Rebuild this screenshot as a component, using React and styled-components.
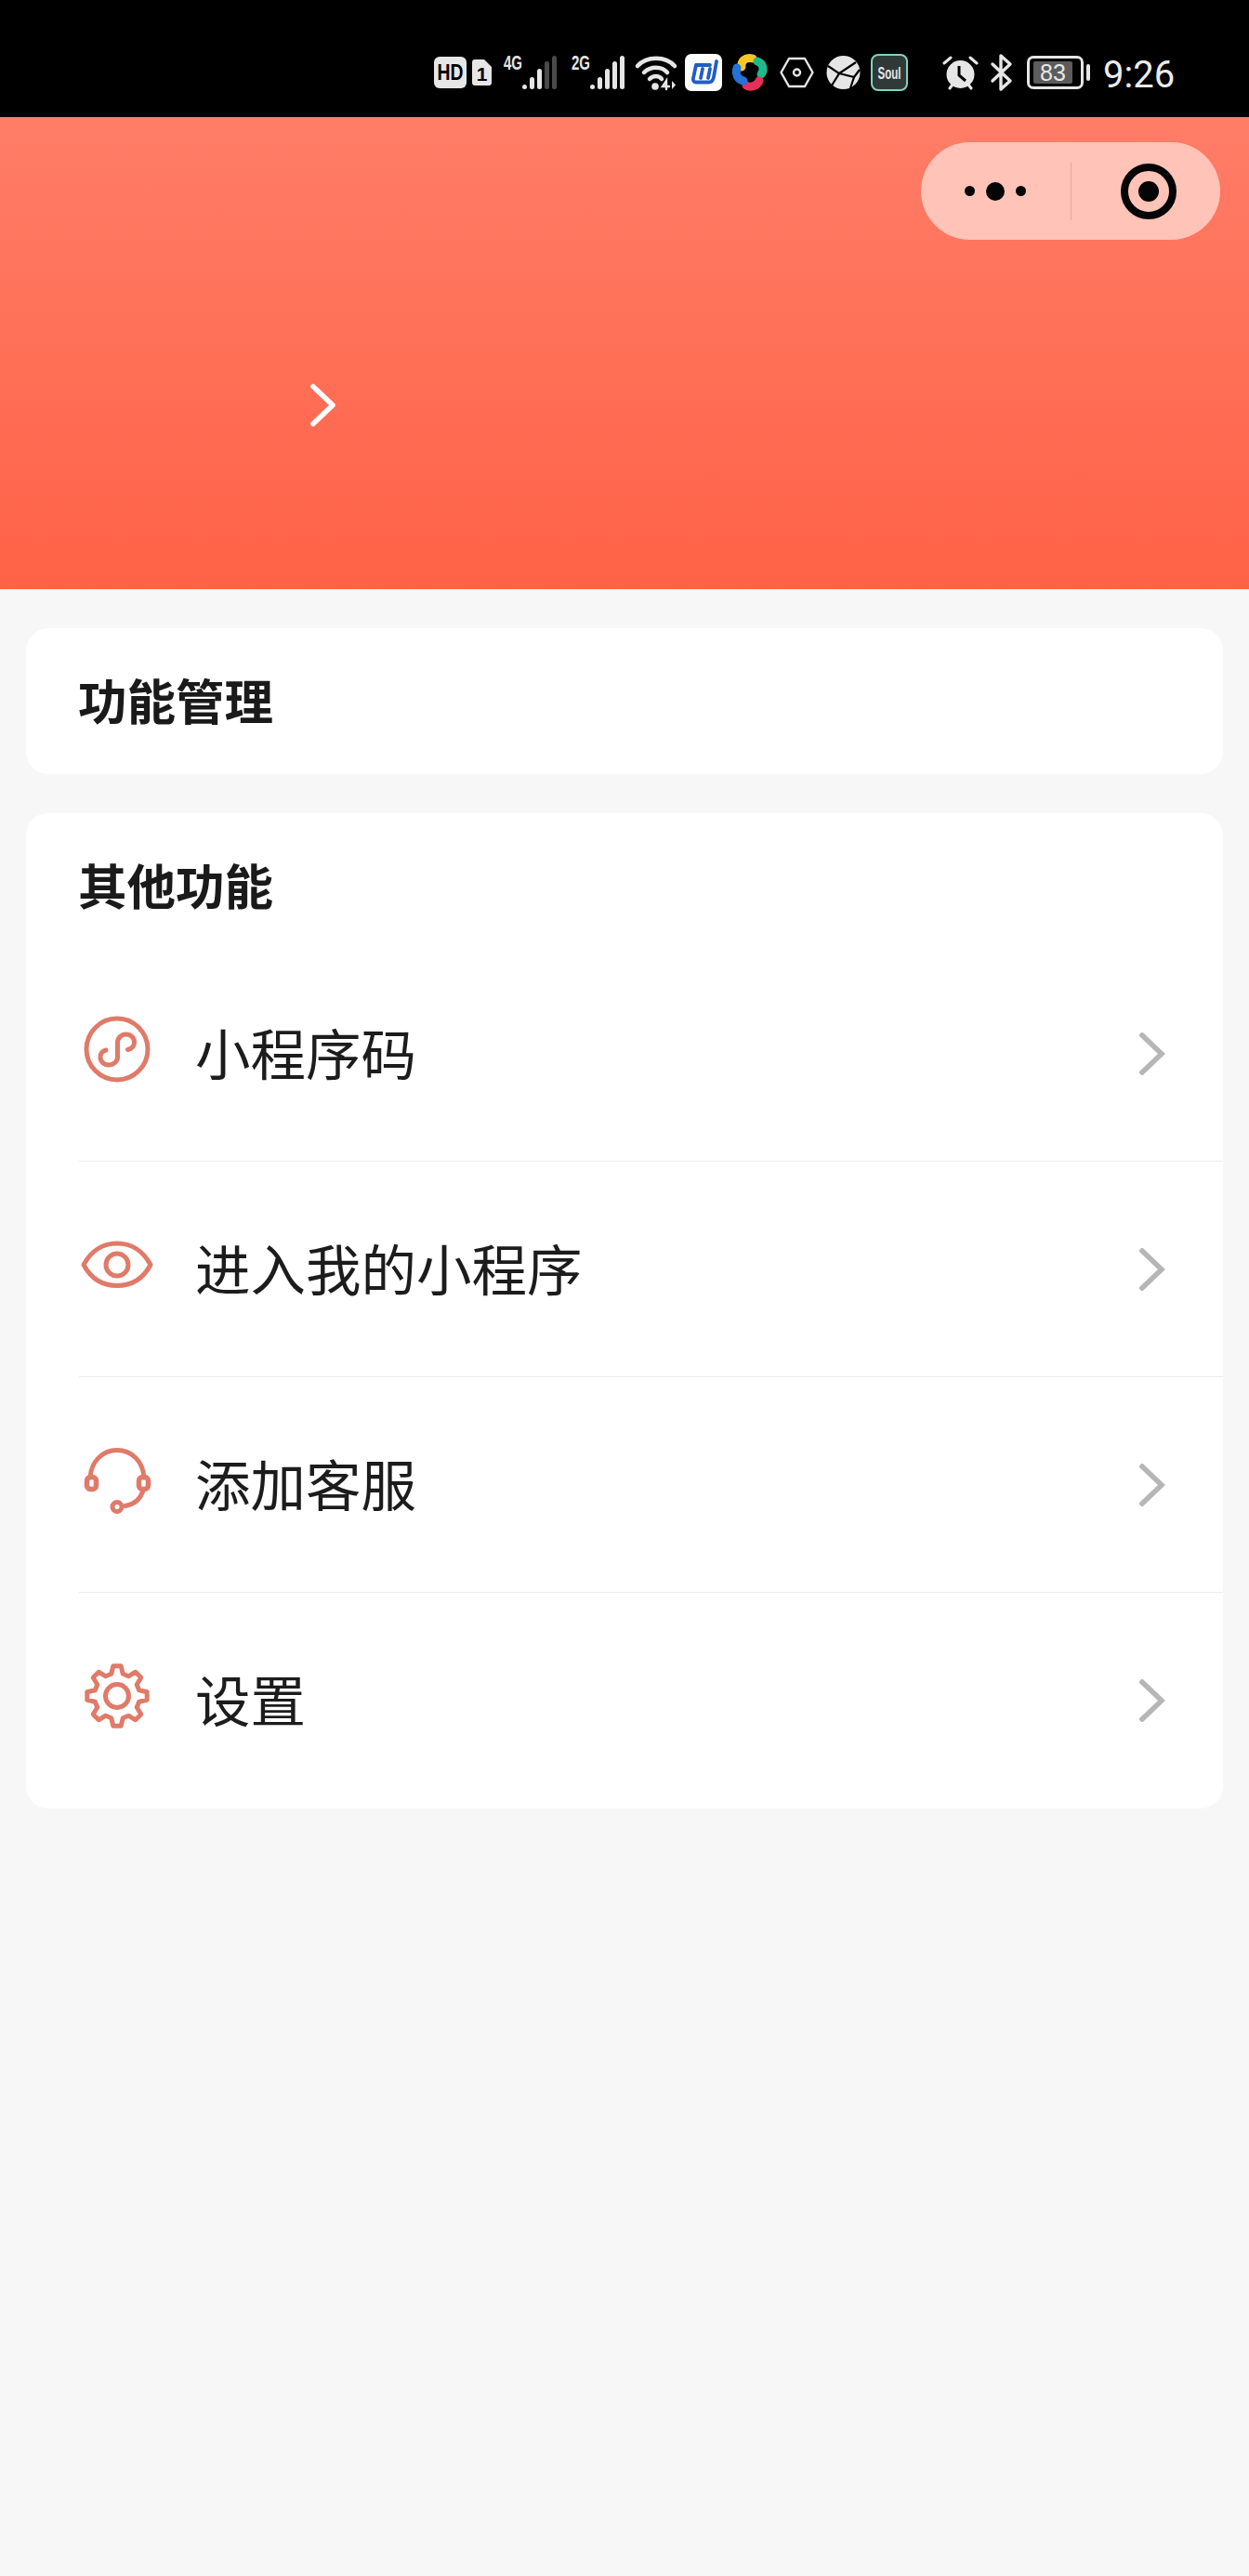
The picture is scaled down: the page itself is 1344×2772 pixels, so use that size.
import React from "react";
import styled, { createGlobalStyle } from "styled-components";

const ICON_COLOR = "#e07a69";

const GlobalStyle = createGlobalStyle`
  html, body {
    margin: 0;
    padding: 0;
    background: #f7f7f7;
    font-family: "Noto Sans CJK SC", "Noto Sans", sans-serif;
  }
`;

// gear outline, 8 teeth
const gearPath = () => {
  const cx = 41;
  const cy = 40;
  const pts = [];
  for (let i = 0; i < 8; i++) {
    const a = (i * Math.PI) / 4 - Math.PI / 2;
    const spots = [
      [-0.26, 24.5],
      [-0.13, 32.5],
      [0.13, 32.5],
      [0.26, 24.5],
    ];
    spots.forEach(([off, r]) => {
      pts.push([cx + r * Math.cos(a + off), cy + r * Math.sin(a + off)]);
    });
  }
  return "M" + pts.map((p) => p[0].toFixed(1) + " " + p[1].toFixed(1)).join(" L") + " Z";
};

function App() {
  const rows = [
    { label: "小程序码", icon: <MiniCodeIcon /> },
    { label: "进入我的小程序", icon: <EyeIcon /> },
    { label: "添加客服", icon: <HeadsetIcon /> },
    { label: "设置", icon: <GearIcon /> },
  ];

  return (
    <Page>
      <GlobalStyle />
      <StatusBar />
      <Header>
        <HeaderArrow viewBox="0 0 30 48" fill="none">
          <path d="M4 4 L25 24 L4 44" stroke="#fff" strokeWidth="5.5" strokeLinecap="round" strokeLinejoin="round" />
        </HeaderArrow>
        <Capsule>
          <MoreDots>
            <Dot $size={11} />
            <Dot $size={20} />
            <Dot $size={11} />
          </MoreDots>
          <CapsuleLine />
          <CloseRing />
        </Capsule>
      </Header>
      <Content>
        <Card>
          <SingleTitle>功能管理</SingleTitle>
        </Card>
        <Card>
          <CardTitle>其他功能</CardTitle>
          {rows.map((row, i) => (
            <Row key={row.label} $last={i === rows.length - 1}>
              <IconBox viewBox="0 0 80 80" fill="none" stroke={ICON_COLOR} strokeWidth="5" strokeLinecap="round" strokeLinejoin="round">
                {row.icon}
              </IconBox>
              <RowLabel>{row.label}</RowLabel>
              <RowArrow viewBox="0 0 28 46" fill="none">
                <path d="M3 3 L24 23 L3 43" stroke="#b6b6b6" strokeWidth="5.5" strokeLinecap="square" />
              </RowArrow>
            </Row>
          ))}
        </Card>
      </Content>
    </Page>
  );
}

export default App;

function MiniCodeIcon() {
  return (
    <>
      <circle cx="41" cy="40" r="33" />
      <path d="M52.5 40.5 C57 39.5 59.5 36.5 59.5 32.5 C59.5 27.5 55.5 24 50.5 24 C45.5 24 41.5 28 41.5 33 L41.5 48.5 C41.5 53.5 37 57 32 57 C27 57 23 53.5 23 48.5 C23 44.5 25.5 42 29 41" />
    </>
  );
}

function EyeIcon() {
  return (
    <>
      <path d="M5 40 C13 25 26 17 41 17 C56 17 69 25 77 40 C69 55 56 62.5 41 62.5 C26 62.5 13 55 5 40 Z" />
      <circle cx="41" cy="40" r="12" />
    </>
  );
}

function HeadsetIcon() {
  return (
    <>
      <path d="M12 37 C13 20 25 7.5 41 7.5 C57 7.5 69 20 70 37" />
      <rect x="8.5" y="36.5" width="10" height="13" rx="4" strokeWidth="5.5" />
      <rect x="64.5" y="36.5" width="10" height="13" rx="4" strokeWidth="5.5" />
      <path d="M69 51 C66 60 59 66 50 67.5" />
      <circle cx="41" cy="68.5" r="5" />
    </>
  );
}

function GearIcon() {
  return (
    <>
      <path d={gearPath()} />
      <circle cx="41" cy="40" r="12.5" />
    </>
  );
}

function SignalIcon({ label, dim }) {
  const heights = [5, 13, 22, 30, 36];
  return (
    <StatusSvg $w={60} $h={48} $gap={13} viewBox="0 -4 60 48">
      <StatusText x="0" y="17" fontSize="22" fontWeight="700" textLength="20" lengthAdjust="spacingAndGlyphs">
        {label}
      </StatusText>
      {heights.map((h, i) => (
        <rect key={i} x={20 + i * 8} y={38 - h} width="5" height={h} rx="2.5" fill={i >= 5 - dim ? "#4a4a4a" : "#e6e6e6"} />
      ))}
    </StatusSvg>
  );
}

function StatusBar() {
  return (
    <StatusWrap>
      <StatusSvg $w={35} $h={34} viewBox="0 0 35 34">
        <rect width="35" height="34" rx="6" fill="#e6e6e6" />
        <StatusText $dark x="17.5" y="25" fontSize="23" fontWeight="700" textAnchor="middle" textLength="28" lengthAdjust="spacingAndGlyphs">
          HD
        </StatusText>
      </StatusSvg>
      <StatusSvg $w={21} $h={28} $gap={6} viewBox="0 0 21 28">
        <path d="M3 0 H13 L21 8 V25 a3 3 0 0 1 -3 3 H3 a3 3 0 0 1 -3 -3 V3 a3 3 0 0 1 3 -3 Z" fill="#e6e6e6" />
        <StatusText $dark x="10.5" y="23" fontSize="21" fontWeight="700" textAnchor="middle">
          1
        </StatusText>
      </StatusSvg>
      <SignalIcon label="4G" dim={2} />
      <SignalIcon label="2G" dim={0} />
      <StatusSvg $w={44} $h={38} $gap={9} viewBox="0 0 44 38" fill="none" stroke="#e6e6e6" strokeLinecap="round">
        <path d="M2 12 C12 1 32 1 42 12" strokeWidth="4.5" />
        <path d="M9 19 C16 12 28 12 34 19" strokeWidth="4.5" />
        <path d="M15 26 C19 22 25 22 28 26" strokeWidth="4.5" />
        <circle cx="21" cy="34" r="3.8" fill="#e6e6e6" stroke="none" />
        <path d="M33 37 V28 L29 34 H36" strokeWidth="2.4" />
        <path d="M39 28 V37 L43 32.5 Z" fill="#e6e6e6" stroke="none" />
      </StatusSvg>
      <StatusSvg $w={40} $h={40} $gap={9} viewBox="0 0 40 40">
        <rect width="40" height="40" rx="7" fill="#fff" />
        <path d="M12 12 H27 M12 12 L9 26 C8.5 29 10 30.5 12 30.5 H25 C29 30.5 30.5 28 31 25 L34 8 M19 16 L17 26 M27 16 L25 26" fill="none" stroke="#1f5fc4" strokeWidth="3.8" strokeLinecap="round" />
      </StatusSvg>
      <StatusSvg $w={38} $h={40} $gap={11} viewBox="0 0 38 40" fill="none" strokeWidth="9" strokeLinecap="round">
        <path d="M22 5 C14 3 9 8 10 14" stroke="#f6c625" />
        <path d="M27 8 C33 10 35 17 31 22" stroke="#1fb98c" />
        <path d="M29 29 C27 34 20 37 15 34" stroke="#e6305a" />
        <path d="M5 15 C3 22 6 28 12 29" stroke="#2572d8" />
      </StatusSvg>
      <StatusSvg $w={37} $h={34} $gap={13} viewBox="0 0 37 34" fill="none" stroke="#e6e6e6" strokeWidth="2.4">
        <path d="M10 2 H27 L35.5 17 L27 32 H10 L1.5 17 Z" strokeLinejoin="round" />
        <circle cx="18.5" cy="17" r="3.5" />
      </StatusSvg>
      <StatusSvg $w={37} $h={38} $gap={13} viewBox="0 0 37 38">
        <circle cx="18.5" cy="19" r="18" fill="#e6e6e6" />
        <path d="M2 12 L14 20 L6 33 M14 20 L32 8 M14 20 L30 24 L26 36 M30 24 L36 16" fill="none" stroke="#000" strokeWidth="2.2" />
      </StatusSvg>
      <StatusSvg $w={40} $h={40} $gap={11} viewBox="0 0 40 40">
        <rect x="1" y="1" width="38" height="38" rx="7" fill="#2f3a38" stroke="#7fd3bd" strokeWidth="2" />
        <StatusText x="20" y="27" fontSize="18" fontWeight="700" textAnchor="middle" textLength="25" lengthAdjust="spacingAndGlyphs">
          Soul
        </StatusText>
      </StatusSvg>
      <StatusSvg $w={39} $h={37} $gap={37} viewBox="0 0 39 37">
        <circle cx="19.5" cy="20" r="15" fill="#e6e6e6" />
        <path d="M2 8 L9 2 M37 8 L30 2 M8 35 L11 31 M31 35 L28 31" stroke="#e6e6e6" strokeWidth="3" strokeLinecap="round" />
        <path d="M18 11 V21 L25 27" fill="none" stroke="#000" strokeWidth="3" />
      </StatusSvg>
      <StatusSvg $w={23} $h={40} $gap={13} viewBox="0 0 23 40" fill="none" stroke="#e6e6e6" strokeWidth="3.4" strokeLinecap="round" strokeLinejoin="round">
        <path d="M2 11 L21 29 L11 38 V2 L21 11 L2 29" />
      </StatusSvg>
      <BatteryBody>
        <BatteryLevel>83</BatteryLevel>
      </BatteryBody>
      <BatteryTip />
      <StatusTime>9:26</StatusTime>
    </StatusWrap>
  );
}

const Page = styled.div`
  width: 1344px;
  min-height: 2772px;
  background: #f7f7f7;
  overflow: hidden;
`;

const StatusWrap = styled.div`
  box-sizing: border-box;
  height: 126px;
  padding: 30px 0 0 467px;
  background: #000;
  display: flex;
  align-items: center;
`;

const StatusSvg = styled.svg`
  flex: none;
  width: ${(p) => p.$w}px;
  height: ${(p) => p.$h}px;
  margin-left: ${(p) => p.$gap || 0}px;
  overflow: visible;
`;

const StatusText = styled.text`
  font-family: "Liberation Sans", sans-serif;
  fill: ${(p) => (p.$dark ? "#000" : "#e6e6e6")};
`;

const BatteryBody = styled.div`
  flex: none;
  box-sizing: border-box;
  width: 61px;
  height: 36px;
  margin-left: 16px;
  border: 3px solid #e6e6e6;
  border-radius: 7px;
  padding: 3px 9px 3px 4px;
  display: flex;
`;

const BatteryLevel = styled.div`
  flex: 1;
  background: #5c5c5c;
  border-radius: 2px;
  color: #e6e6e6;
  font: 400 25px/24px "Liberation Sans", sans-serif;
  text-align: center;
`;

const BatteryTip = styled.div`
  flex: none;
  width: 4px;
  height: 18px;
  margin-left: 3px;
  background: #e6e6e6;
  border-radius: 2px;
`;

const StatusTime = styled.div`
  flex: none;
  margin-left: 14px;
  padding-top: 5px;
  color: #ececec;
  font: 400 40px/46px "Roboto", sans-serif;
`;

const Header = styled.div`
  position: relative;
  box-sizing: border-box;
  height: 508px;
  padding: 286px 0 0 333px;
  background: linear-gradient(180deg, #ff7d67 0%, #ff7159 45%, #ff6247 100%);
`;

const HeaderArrow = styled.svg`
  display: block;
  width: 30px;
  height: 48px;
`;

const Capsule = styled.div`
  position: absolute;
  top: 27px;
  left: 991px;
  box-sizing: border-box;
  width: 322px;
  height: 105px;
  border-radius: 53px;
  background: #ffc3b7;
  display: flex;
  align-items: center;
`;

const MoreDots = styled.div`
  width: 161px;
  padding-left: 47px;
  box-sizing: border-box;
  display: flex;
  align-items: center;
  gap: 12px;
`;

const Dot = styled.span`
  width: ${(p) => p.$size}px;
  height: ${(p) => p.$size}px;
  border-radius: 50%;
  background: #050505;
`;

const CapsuleLine = styled.div`
  width: 1px;
  height: 62px;
  background: #e3a99d;
`;

const CloseRing = styled.div`
  position: relative;
  box-sizing: border-box;
  width: 60px;
  height: 60px;
  margin-left: 53px;
  border: 8px solid #050505;
  border-radius: 50%;

  &::after {
    content: "";
    position: absolute;
    top: 11px;
    left: 11px;
    width: 22px;
    height: 22px;
    border-radius: 50%;
    background: #050505;
  }
`;

const Content = styled.div`
  padding: 42px 28px 0;
  display: flex;
  flex-direction: column;
  gap: 42px;
`;

const Card = styled.div`
  background: #fff;
  border-radius: 24px;
  overflow: hidden;
`;

const SingleTitle = styled.div`
  height: 157px;
  padding: 0 0 5px 56px;
  box-sizing: border-box;
  display: flex;
  align-items: center;
  color: #1a1a1a;
  font-size: 52.5px;
  font-weight: 700;
`;

const CardTitle = styled.div`
  padding: 44px 0 35px 56px;
  color: #1a1a1a;
  font-size: 52.5px;
  line-height: 64px;
  font-weight: 700;
`;

const Row = styled.div`
  box-sizing: border-box;
  height: 232px;
  margin-left: 57px;
  display: flex;
  align-items: center;
  border-bottom: ${(p) => (p.$last ? "none" : "1px solid #ececec")};
`;

const IconBox = styled.svg`
  flex: none;
  width: 80px;
  height: 80px;
  margin-bottom: 10px;
`;

const RowLabel = styled.div`
  flex: 1;
  margin-left: 45px;
  margin-bottom: 6px;
  color: #1c1c1c;
  font-size: 59.5px;
  line-height: 70px;
`;

const RowArrow = styled.svg`
  flex: none;
  width: 28px;
  height: 46px;
  margin-right: 62px;
`;
